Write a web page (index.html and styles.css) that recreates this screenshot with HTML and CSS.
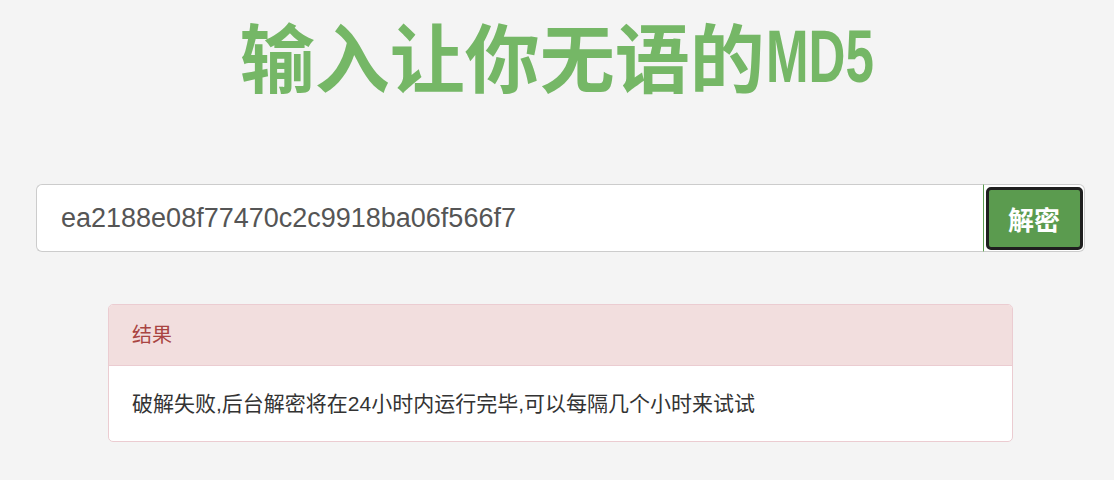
FILE: index.html
```html
<!DOCTYPE html>
<html lang="zh">
<head>
<meta charset="utf-8">
<title>输入让你无语的MD5</title>
<link rel="stylesheet" href="styles.css">
</head>
<body>
<h1 class="title">输入让你无语的<span class="title-latin">MD5</span></h1>
<form class="search">
  <input class="search-input" type="text" value="ea2188e08f77470c2c9918ba06f566f7">
  <button class="search-btn" type="button">解密</button>
</form>
<div class="panel">
  <div class="panel-heading">结果</div>
  <div class="panel-body">破解失败,后台解密将在24小时内运行完毕,可以每隔几个小时来试试</div>
</div>
</body>
</html>
```

FILE: styles.css
```css
html, body {
  margin: 0;
  padding: 0;
  background: #f4f4f4;
}
body {
  font-family: "Liberation Sans", "Noto Sans CJK SC", sans-serif;
  color: #333;
  overflow: hidden;
}
.title {
  margin: 0;
  padding-top: 0;
  height: 150px;
  box-sizing: border-box;
  text-align: center;
  font-family: "Noto Sans CJK SC", sans-serif;
  font-weight: 700;
  font-size: 75px;
  line-height: 109px;
  color: #75b766;
  letter-spacing: 0;
}
.title-latin {
  display: inline-block;
  font-family: "Liberation Sans", sans-serif;
  font-weight: 700;
  font-size: 74px;
  line-height: 80px;
  transform: translateY(-5px) scaleX(0.69);
  transform-origin: left center;
  margin-left: 1px;
  margin-right: -48px;
}
.search {
  display: flex;
  margin: 34px 29px 0 36px;
  height: 68px;
}
.search-input {
  flex: 1;
  min-width: 0;
  box-sizing: border-box;
  height: 68px;
  border: 1px solid #ccc;
  border-right: none;
  border-radius: 6px 0 0 6px;
  background: #fff;
  padding: 0 24px;
  font-family: "Liberation Sans", sans-serif;
  font-size: 27px;
  color: #555;
  outline: none;
}
.search-btn {
  width: 102px;
  height: 68px;
  box-sizing: border-box;
  margin: 0;
  padding: 0;
  border: 1px solid #ccc;
  border-left: 1px solid #5b9b4f;
  border-radius: 0 6px 6px 0;
  background: #fff;
  display: flex;
  align-items: center;
  justify-content: center;
  position: relative;
  isolation: isolate;
  font-family: "Noto Sans CJK SC", sans-serif;
  font-weight: 700;
  font-size: 26px;
  color: #fff;
  cursor: pointer;
}
.search-btn::before {
  content: "";
  position: absolute;
  left: 2px;
  top: 2px;
  right: 1px;
  bottom: 1px;
  border: 3px solid #1f1f1f;
  border-radius: 5px;
  background: #5b9b4f;
  z-index: -1;
}
.panel {
  margin: 52px 101px 0 108px;
  border: 1px solid #ebccd1;
  border-radius: 5px;
  background: #fff;
  overflow: hidden;
}
.panel-heading {
  background: #f2dede;
  border-bottom: 1px solid #ebccd1;
  color: #a94442;
  font-family: "Liberation Sans", "Noto Sans CJK SC", sans-serif;
  font-size: 20px;
  line-height: 28px;
  padding: 16px 23px 16px 23px;
}
.panel-body {
  font-family: "Liberation Sans", "Noto Sans CJK SC", sans-serif;
  font-size: 21px;
  line-height: 28px;
  padding: 24px 23px 23px 23px;
  color: #333;
}
```
